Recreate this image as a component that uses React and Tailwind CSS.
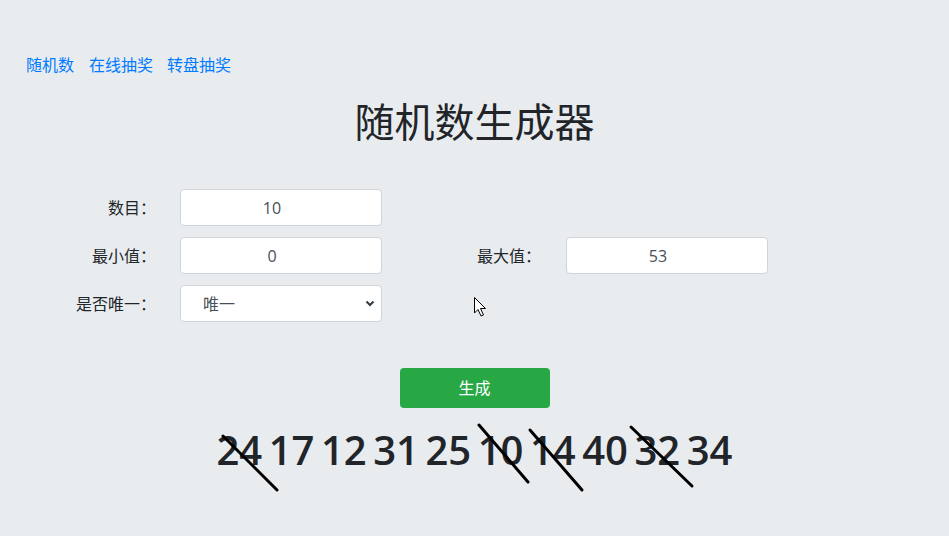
import { useState } from 'react'

const nums = [24, 17, 12, 31, 25, 10, 14, 40, 32, 34]

function Field({ label, value }) {
  return (
    <>
      <label className="w-[156px] text-right text-[16px] text-[#212529]">{label}</label>
      <input
        defaultValue={value}
        className="ml-[24px] h-[37px] w-[202px] rounded-[4px] border border-[#ced4da] bg-white pr-[18px] text-center text-[16px] text-[#495057] outline-none"
      />
    </>
  )
}

export default function App() {
  const [unique, setUnique] = useState('唯一')

  return (
    <div className="relative min-h-screen bg-[#e9ecef] font-['Open_Sans','Noto_Sans_CJK_SC',sans-serif] text-[#212529]">
      <nav className="flex pl-[26px] pt-[53px] text-[16px] leading-6 text-[#007bff]">
        <a href="#">随机数</a>
        <a href="#" className="ml-[15px]">在线抽奖</a>
        <a href="#" className="ml-[14px]">转盘抽奖</a>
      </nav>

      <h1 className="mt-[21px] text-center text-[40px] font-normal leading-[48px]">随机数生成器</h1>

      <div className="mt-[43px] flex flex-col gap-[11px]">
        <div className="flex items-center">
          <Field label="数目：" value="10" />
        </div>
        <div className="flex items-center">
          <Field label="最小值：" value="0" />
          <label className="w-[159px] text-right text-[16px]">最大值：</label>
          <input
            defaultValue="53"
            className="ml-[25px] h-[37px] w-[202px] rounded-[4px] border border-[#ced4da] bg-white pr-[18px] text-center text-[16px] text-[#495057] outline-none"
          />
        </div>
        <div className="flex items-center">
          <label className="w-[156px] text-right text-[16px]">是否唯一：</label>
          <div className="relative ml-[24px]">
            <select
              value={unique}
              onChange={e => setUnique(e.target.value)}
              className="h-[37px] w-[202px] appearance-none rounded-[4px] border border-[#ced4da] bg-white pl-[22px] text-[16px] text-[#495057] outline-none"
            >
              <option>唯一</option>
              <option>不唯一</option>
            </select>
            <svg className="pointer-events-none absolute right-[7px] top-[15px]" width="10" height="7" viewBox="0 0 10 7">
              <path d="M1.5 1.5 L5 5 L8.5 1.5" fill="none" stroke="#343a40" strokeWidth="2" />
            </svg>
          </div>
        </div>
      </div>

      <div className="mt-[46px] flex justify-center">
        <button className="h-[40px] w-[150px] rounded-[4px] bg-[#28a745] text-[16px] text-white">生成</button>
      </div>

      <div className="mt-[12px] flex justify-center gap-[6.5px] text-[40px] font-semibold leading-[60px] text-[#212529]">
        {nums.map((n, i) => (
          <span key={i}>{n}</span>
        ))}
      </div>

      <svg className="pointer-events-none absolute left-0 top-0" width="949" height="536">
        <g stroke="#000" strokeWidth="3" strokeLinecap="round">
          <line x1="223" y1="436" x2="277" y2="490" />
          <line x1="479" y1="425" x2="528" y2="482" />
          <line x1="530" y1="430" x2="582" y2="490" />
          <line x1="631" y1="427" x2="692" y2="486" />
        </g>
        <path d="M474.5 297.5 L474.5 313 L478 309.5 L481 316 L483.5 315 L480.5 308.5 L485.5 308.5 Z" fill="#fff" stroke="#000" strokeWidth="1" />
      </svg>
    </div>
  )
}
